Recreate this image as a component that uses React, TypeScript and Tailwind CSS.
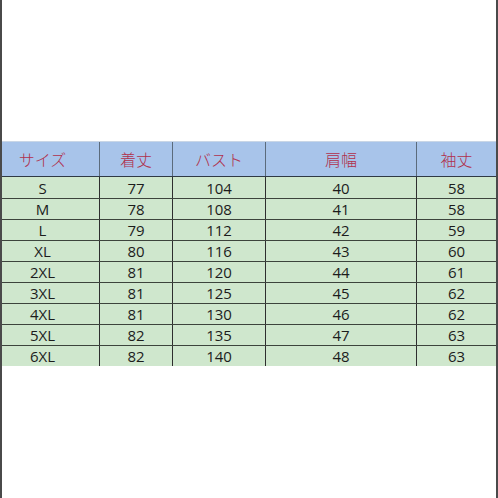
const headers = ['サイズ', '着丈', 'バスト', '肩幅', '袖丈']

const rows = [
  ['S', '77', '104', '40', '58'],
  ['M', '78', '108', '41', '58'],
  ['L', '79', '112', '42', '59'],
  ['XL', '80', '116', '43', '60'],
  ['2XL', '81', '120', '44', '61'],
  ['3XL', '81', '125', '45', '62'],
  ['4XL', '81', '130', '46', '62'],
  ['5XL', '82', '135', '47', '63'],
  ['6XL', '82', '140', '48', '63'],
]

const cols = 'grid grid-cols-[98px_73px_93px_151px_79px]'

export default function App() {
  return (
    <div className="flex h-[498px] w-[498px] flex-col border-x-2 border-[#4a4a4a] bg-white pt-[141px]">
      <div className={`${cols} h-[36px] border-b border-t border-b-[#2f3a44] border-t-[#c9d6e6] bg-[#a8c4ea] font-['Noto_Sans_CJK_JP',sans-serif] text-[16px] font-light text-[#b0304c]`}>
        {headers.map((h, i) => (
          <div
            key={h}
            className={`flex items-center justify-center ${i === 0 ? 'pr-4' : ''} ${i < 4 ? 'border-r border-[#5b6b7c]' : ''}`}
          >
            {h}
          </div>
        ))}
      </div>
      {rows.map((r, ri) => (
        <div
          key={r[0]}
          className={`${cols} h-[21px] bg-[#cfe7cd] font-['Open_Sans',sans-serif] text-[15px] text-[#1c1c1c] ${ri > 0 ? 'border-t border-[#3c443c]' : ''}`}
        >
          {r.map((v, i) => (
            <div
              key={i}
              className={`flex items-center justify-center pt-px leading-none ${i === 0 ? 'pr-4' : ''} ${i < 4 ? 'border-r border-[#2e2e2e]' : ''}`}
            >
              {v}
            </div>
          ))}
        </div>
      ))}
    </div>
  )
}
